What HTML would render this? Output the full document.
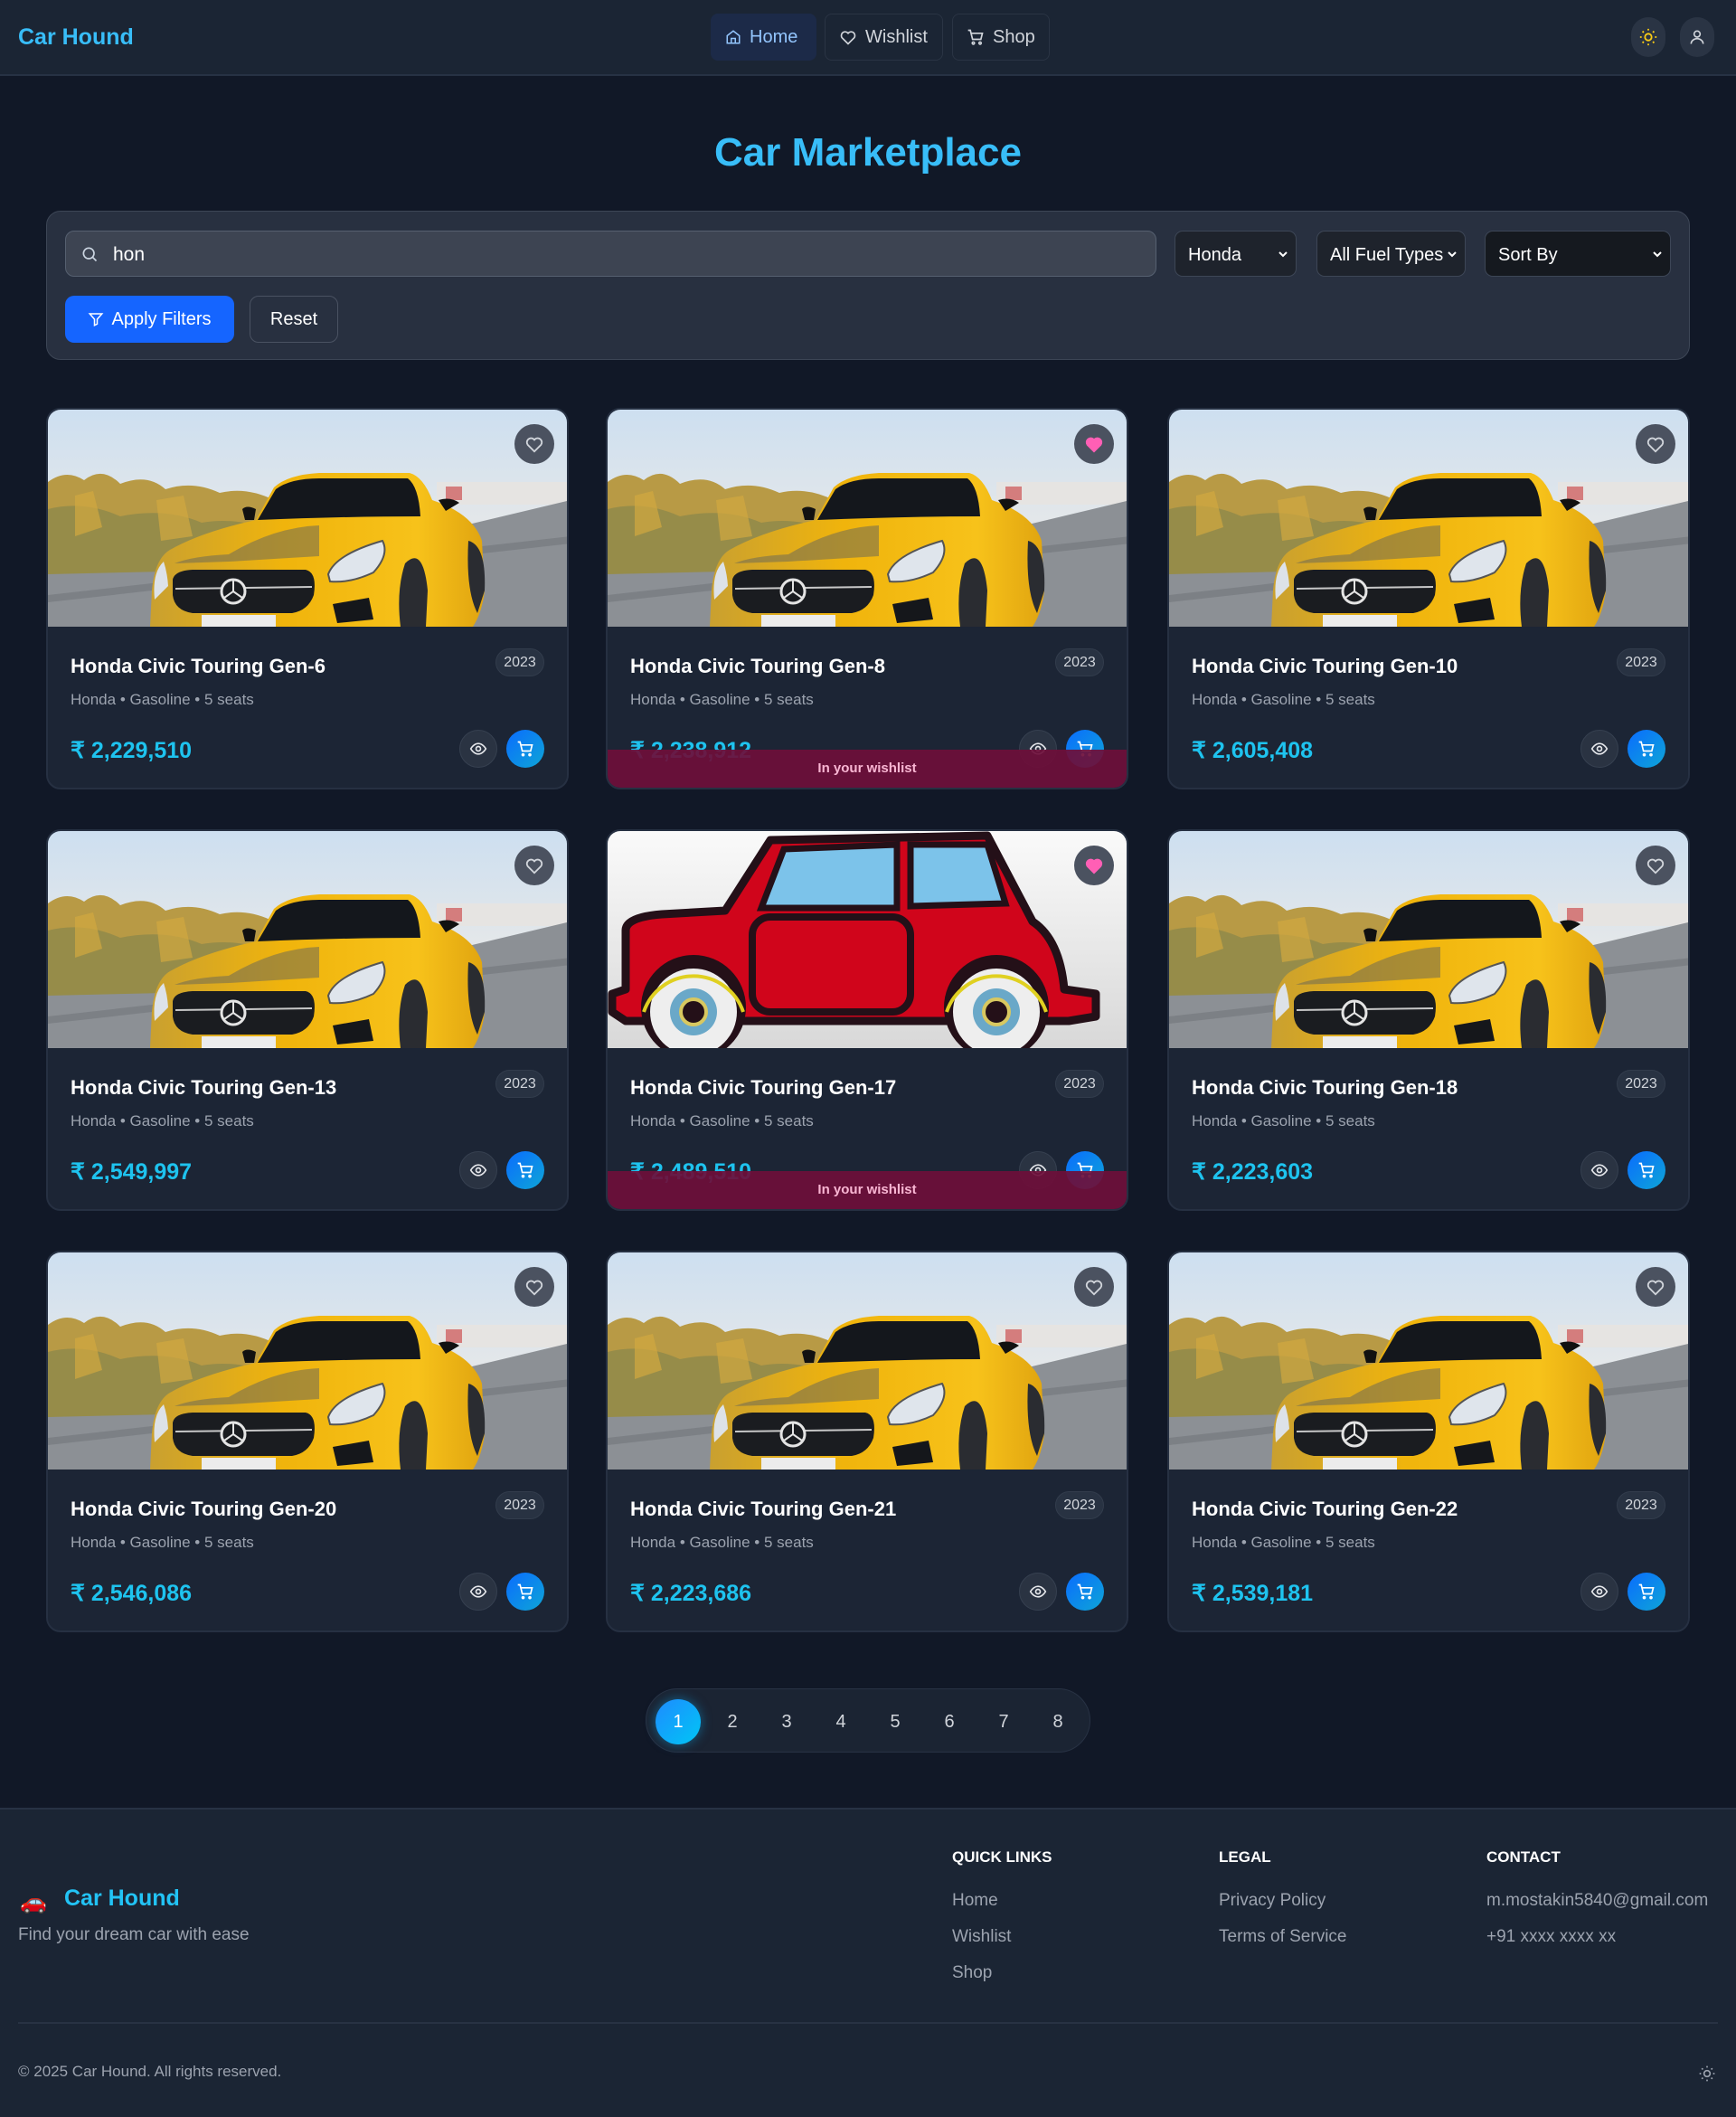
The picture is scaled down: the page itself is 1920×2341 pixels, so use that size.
<!DOCTYPE html>
<html><head><meta charset="utf-8">
<style>
*{box-sizing:border-box;margin:0;padding:0}
body{width:1920px;height:2341px;background:#111827;font-family:"Liberation Sans",sans-serif;color:#fff;position:relative;overflow:hidden}
.hdr{position:absolute;left:0;top:0;width:1920px;height:84px;background:#1b2534;border-bottom:2px solid #273244}
.logo{position:absolute;left:20px;top:27px;font-size:25px;font-weight:bold;color:#38bdf8}
.nav{position:absolute;top:15px;height:52px;border-radius:8px;border:1px solid #2a3444;display:flex;align-items:center;gap:9px;padding:0 15px;font-size:20px;color:#d1d5db}
.rbtn{position:absolute;top:19px;width:38px;height:44px;border-radius:20px;background:#2a3444;display:flex;align-items:center;justify-content:center}
h1{position:absolute;left:0;width:1920px;top:144px;text-align:center;font-size:44px;color:#38bdf8;font-weight:bold}
.panel{position:absolute;left:51px;top:233px;width:1818px;height:165px;background:#283040;border:1px solid #3d4656;border-radius:16px}
.search{position:absolute;left:20px;top:21px;width:1207px;height:51px;background:#3d4452;border:1px solid #566070;border-radius:10px;font-size:21px;padding:14px 0 0 52px}
.sel{position:absolute;top:21px;height:51px;background:#1e232c;border:1px solid #3d4656;border-radius:9px;font-size:20px;padding:15px 0 0 14px}
.sel svg{position:absolute;right:8px;top:20px}
.btn{position:absolute;top:93px;height:52px;border-radius:10px;font-size:20px;display:flex;align-items:center;justify-content:center;gap:8px}
.card{position:absolute;width:578px;height:422px;background:#1c2535;border:2px solid #263042;border-radius:16px;overflow:hidden}
.card svg.img{position:absolute;left:0;top:0;display:block}
.heart{position:absolute;right:14px;top:16px;width:44px;height:44px;border-radius:50%;background:#4b5260;display:flex;align-items:center;justify-content:center}
.ttl{position:absolute;left:25px;top:271px;font-size:22px;font-weight:bold}
.yr{position:absolute;right:25px;top:264px;width:54px;height:31px;border-radius:16px;background:#283242;border:1px solid #323c4c;font-size:16px;color:#d1d5db;text-align:center;line-height:29px}
.meta{position:absolute;left:25px;top:311px;font-size:17px;color:#9ca3af}
.price{position:absolute;left:25px;top:362px;font-size:25px;font-weight:bold;color:#1ec3ef}
.eye{position:absolute;right:77px;top:354px;width:42px;height:42px;border-radius:50%;background:#2a3342;border:1px solid #364050;display:flex;align-items:center;justify-content:center}
.cart{position:absolute;right:25px;top:354px;width:42px;height:42px;border-radius:50%;background:linear-gradient(135deg,#0a6cff,#0ea5d6);display:flex;align-items:center;justify-content:center}
.wl{position:absolute;left:0;bottom:0;width:100%;height:42px;background:rgba(110,14,58,.92);color:#f9b6d3;font-size:15px;font-weight:bold;text-align:center;line-height:42px}
.pag{position:absolute;left:714px;top:1867px;width:492px;height:71px;border-radius:36px;background:#1b2433;border:1px solid #283244}
.pg{position:absolute;top:11px;width:50px;height:50px;border-radius:50%;font-size:20px;color:#d1d5db;text-align:center;line-height:50px}
.foot{position:absolute;left:0;top:1999px;width:1920px;height:342px;background:#1b2534;border-top:2px solid #273244}
.fh{position:absolute;top:43px;font-size:17px;font-weight:bold}
.fl{position:absolute;font-size:19px;color:#9ca3af}
</style></head><body>
<svg width="0" height="0" style="position:absolute">
<defs>
<linearGradient id="sky" x1="0" y1="0" x2="0" y2="1"><stop offset="0" stop-color="#cddff0"/><stop offset=".5" stop-color="#e3e7ea"/><stop offset="1" stop-color="#d8d8d6"/></linearGradient>
<linearGradient id="yb" x1="0" y1="0" x2="1" y2="0"><stop offset="0" stop-color="#c9a030"/><stop offset=".4" stop-color="#f0b40c"/><stop offset=".8" stop-color="#f7c21a"/><stop offset="1" stop-color="#e0a410"/></linearGradient>
<g id="ycar">
<rect width="578" height="240" fill="url(#sky)"/>
<path d="M0 80 Q20 65 40 78 Q60 62 80 82 Q110 70 130 88 Q160 78 190 92 Q220 85 250 100 L258 180 L0 195Z" fill="#b89a45"/>
<path d="M0 110 Q40 100 80 118 Q130 108 170 125 Q210 118 250 135 L255 182 L0 195Z" fill="#8f8a4a" opacity=".85"/>
<path d="M30 95 L50 90 L60 130 L30 140Z M120 100 L150 95 L160 140 L125 145Z" fill="#d2a840" opacity=".7"/>
<rect x="430" y="80" width="148" height="25" fill="#e6e4e2"/>
<rect x="440" y="85" width="18" height="15" fill="#c8383a" opacity=".6"/>
<path d="M0 182 L260 176 L578 100 L578 240 L0 240Z" fill="#8c9095"/>
<path d="M0 205 L578 140 L578 148 L0 213Z" fill="#6c7075" opacity=".5"/>
<path d="M113 240 L115 200 Q118 165 135 155 Q170 135 230 122 L250 86 Q265 72 300 70 L400 70 Q415 74 425 100 Q470 115 480 145 L483 200 Q480 225 470 240Z" fill="url(#yb)"/>
<path d="M232 122 L252 88 Q268 76 300 76 L398 76 Q410 85 412 118 Q330 118 232 122Z" fill="#14171c"/>
<path d="M140 170 Q160 162 200 160 Q250 130 300 128 L300 162 Q250 165 200 168Z" fill="#6e6a55" opacity=".55"/>
<path d="M138 188 Q140 178 160 177 L285 177 Q298 180 294 205 Q288 222 270 225 L160 225 Q140 222 138 205Z" fill="#1a1c20"/>
<path d="M141 198 L292 196" stroke="#c8c8c8" stroke-width="2"/>
<circle cx="205" cy="201" r="13" fill="#1a1c20" stroke="#e4e4e4" stroke-width="3"/>
<path d="M205 189 L205 201 L195 208 M205 201 L215 208" stroke="#e4e4e4" stroke-width="2" fill="none"/>
<path d="M310 182 Q318 160 370 145 Q378 160 360 180 Q335 192 312 190Z" fill="#dfe5ec" stroke="#555" stroke-width="2"/>
<path d="M118 210 Q115 180 128 168 Q132 180 133 195Z" fill="#dde2e8"/>
<path d="M315 215 L355 208 L360 232 L320 236Z" fill="#15171b"/>
<path d="M395 170 Q415 150 420 200 L418 240 L390 240 Q385 200 395 170Z" fill="#2a2c31"/>
<path d="M465 145 Q485 150 483 200 L475 225 Q462 200 465 145Z" fill="#2a2c31"/>
<rect x="170" y="227" width="82" height="13" fill="#ececec"/>
<path d="M215 110 Q220 105 230 110 L228 122 L218 122Z M432 100 Q445 96 455 103 L440 112Z" fill="#111"/>
</g>
</defs></svg>

<div class="hdr">
<div class="logo">Car Hound</div>
<div class="nav" style="left:786px;width:117px;background:#1c2a48;border-color:#1c2a48;color:#93c5fd"><svg width="18" height="18" viewBox="0 0 24 24" fill="none" stroke="#93c5fd" stroke-width="2"><path d="M3 10l9-7 9 7v11H3z"/><path d="M9 21v-7h6v7"/></svg>Home</div>
<div class="nav" style="left:912px;width:131px"><svg width="20" height="20" viewBox="0 0 24 24" fill="none" stroke="#d1d5db" stroke-width="2"><path d="M12 21l-8-8a5 5 0 017-7l1 1 1-1a5 5 0 017 7z"/></svg>Wishlist</div>
<div class="nav" style="left:1053px;width:108px"><svg width="20" height="20" viewBox="0 0 24 24" fill="none" stroke="#d1d5db" stroke-width="2"><path d="M2 3h3l3 12h11l2-8H6"/><circle cx="9" cy="20" r="1.5"/><circle cx="18" cy="20" r="1.5"/></svg>Shop</div>
<div class="rbtn" style="left:1804px"><svg width="22" height="22" viewBox="0 0 24 24" fill="none" stroke="#facc15" stroke-width="2"><circle cx="12" cy="12" r="4"/><path d="M12 2v2M12 20v2M2 12h2M20 12h2M5 5l1.5 1.5M17.5 17.5L19 19M5 19l1.5-1.5M17.5 6.5L19 5"/></svg></div>
<div class="rbtn" style="left:1858px"><svg width="20" height="20" viewBox="0 0 24 24" fill="none" stroke="#d1d5db" stroke-width="2"><circle cx="12" cy="8" r="4"/><path d="M4 21c0-4 4-7 8-7s8 3 8 7"/></svg></div>
</div>

<h1>Car Marketplace</h1>

<div class="panel">
<div class="search"><svg style="position:absolute;left:16px;top:15px" width="20" height="20" viewBox="0 0 24 24" fill="none" stroke="#cbd5e1" stroke-width="2"><circle cx="11" cy="11" r="7"/><path d="M16 16l5 5"/></svg>hon</div>
<div class="sel" style="left:1247px;width:135px">Honda<svg width="12" height="10" viewBox="0 0 12 10"><path d="M2 3l4 4 4-4" fill="none" stroke="#fff" stroke-width="2"/></svg></div>
<div class="sel" style="left:1404px;width:165px">All Fuel Types<svg width="12" height="10" viewBox="0 0 12 10"><path d="M2 3l4 4 4-4" fill="none" stroke="#fff" stroke-width="2"/></svg></div>
<div class="sel" style="left:1590px;width:206px;background:#15191f">Sort By<svg width="12" height="10" viewBox="0 0 12 10"><path d="M2 3l4 4 4-4" fill="none" stroke="#fff" stroke-width="2"/></svg></div>
<div class="btn" style="left:20px;width:187px;background:#1565ff"><svg width="18" height="18" viewBox="0 0 24 24" fill="none" stroke="#fff" stroke-width="2"><path d="M3 4h18l-7 8v7l-4 2v-9z"/></svg>Apply Filters</div>
<div class="btn" style="left:224px;width:98px;border:1px solid #4a5262">Reset</div>
</div>

<div id="cards"></div>
<script>
var L=[51,670,1291],T=[451,917,1383];
var n=[6,8,10,13,17,18,20,21,22],p=["2,229,510","2,238,912","2,605,408","2,549,997","2,489,510","2,223,603","2,546,086","2,223,686","2,539,181"];
var red='<svg class="img" width="578" height="240" viewBox="0 0 578 240"><defs><linearGradient id="wb" x1="0" y1="0" x2="0" y2="1"><stop offset="0" stop-color="#fafafa"/><stop offset="1" stop-color="#d8d8d8"/></linearGradient></defs><rect width="578" height="240" fill="url(#wb)"/><path d="M20 110 Q20 95 60 92 L130 88 L180 10 L420 5 L470 100 Q500 120 505 175 L540 180 L540 205 L510 210 L20 210 L5 200 L5 180 L20 175Z" fill="#d0051b" stroke="#241018" stroke-width="9" stroke-linejoin="round"/><path d="M195 20 L320 15 L320 85 L170 85Z" fill="#7cc3ea" stroke="#241018" stroke-width="7"/><path d="M335 15 L420 15 L440 80 L335 83Z" fill="#7cc3ea" stroke="#241018" stroke-width="7"/><rect x="160" y="95" width="175" height="105" rx="20" fill="none" stroke="#241018" stroke-width="8"/><circle cx="95" cy="195" r="58" fill="#241018"/><circle cx="95" cy="200" r="48" fill="#eee"/><circle cx="95" cy="200" r="26" fill="#6aa8c8"/><circle cx="95" cy="200" r="14" fill="#241018" stroke="#d8c860" stroke-width="4"/><circle cx="430" cy="195" r="58" fill="#241018"/><circle cx="430" cy="200" r="48" fill="#eee"/><circle cx="430" cy="200" r="26" fill="#6aa8c8"/><circle cx="430" cy="200" r="14" fill="#241018" stroke="#d8c860" stroke-width="4"/><path d="M40 200 A58 58 0 0 1 150 200" fill="none" stroke="#e0d020" stroke-width="4"/><path d="M375 200 A58 58 0 0 1 485 200" fill="none" stroke="#e0d020" stroke-width="4"/></svg>';
var h='';
for(var i=0;i<9;i++){var r=Math.floor(i/3),c=i%3,w=(i==1||i==4);
h+='<div class="card" style="left:'+L[c]+'px;top:'+T[r]+'px">'+(i==4?red:'<svg class="img" width="578" height="240" viewBox="0 0 578 240"><use href="#ycar"/></svg>')+
'<div class="heart"><svg width="22" height="22" viewBox="0 0 24 24" fill="'+(w?'#ff5fb5':'none')+'" stroke="'+(w?'#ff5fb5':'#d1d5db')+'" stroke-width="2"><path d="M12 21l-8-8a5 5 0 017-7l1 1 1-1a5 5 0 017 7z"/></svg></div>'+
'<div class="ttl">Honda Civic Touring Gen-'+n[i]+'</div><div class="yr">2023</div><div class="meta">Honda • Gasoline • 5 seats</div><div class="price">₹ '+p[i]+'</div>'+
'<div class="eye"><svg width="20" height="20" viewBox="0 0 24 24" fill="none" stroke="#e5e7eb" stroke-width="2"><path d="M2 12s4-7 10-7 10 7 10 7-4 7-10 7S2 12 2 12z"/><circle cx="12" cy="12" r="3"/></svg></div>'+
'<div class="cart"><svg width="20" height="20" viewBox="0 0 24 24" fill="none" stroke="#fff" stroke-width="2"><path d="M2 3h3l3 12h11l2-8H6"/><circle cx="9" cy="20" r="1.2"/><circle cx="18" cy="20" r="1.2"/></svg></div>'+
(w?'<div class="wl">In your wishlist</div>':'')+'</div>';}
document.getElementById('cards').innerHTML=h;
</script>

<div class="pag">
<div class="pg" style="left:10px;background:linear-gradient(135deg,#1e8bff,#00c6f5);color:#fff;box-shadow:0 0 12px rgba(14,165,233,.5)">1</div>
<div class="pg" style="left:70px">2</div><div class="pg" style="left:130px">3</div><div class="pg" style="left:190px">4</div><div class="pg" style="left:250px">5</div><div class="pg" style="left:310px">6</div><div class="pg" style="left:370px">7</div><div class="pg" style="left:430px">8</div>
</div>

<div class="foot">
<div style="position:absolute;left:22px;top:88px;font-size:24px">🚗</div>
<div style="position:absolute;left:71px;top:84px;font-size:25px;font-weight:bold;color:#22c3f5">Car Hound</div>
<div class="fl" style="left:20px;top:128px">Find your dream car with ease</div>
<div class="fh" style="left:1053px">QUICK LINKS</div>
<div class="fh" style="left:1348px">LEGAL</div>
<div class="fh" style="left:1644px">CONTACT</div>
<div class="fl" style="left:1053px;top:90px">Home</div>
<div class="fl" style="left:1053px;top:130px">Wishlist</div>
<div class="fl" style="left:1053px;top:170px">Shop</div>
<div class="fl" style="left:1348px;top:90px">Privacy Policy</div>
<div class="fl" style="left:1348px;top:130px">Terms of Service</div>
<div class="fl" style="left:1644px;top:90px">m.mostakin5840@gmail.com</div>
<div class="fl" style="left:1644px;top:130px">+91 xxxx xxxx xx</div>
<div style="position:absolute;left:20px;top:235px;width:1880px;height:2px;background:#283243"></div>
<div class="fl" style="left:20px;top:280px;font-size:17px">© 2025 Car Hound. All rights reserved.</div>
<svg style="position:absolute;left:1878px;top:282px" width="20" height="20" viewBox="0 0 24 24" fill="none" stroke="#9ca3af" stroke-width="2"><circle cx="12" cy="12" r="4"/><path d="M12 2v2M12 20v2M2 12h2M20 12h2M5 5l1.5 1.5M17.5 17.5L19 19M5 19l1.5-1.5M17.5 6.5L19 5"/></svg>
</div>
</body></html>
